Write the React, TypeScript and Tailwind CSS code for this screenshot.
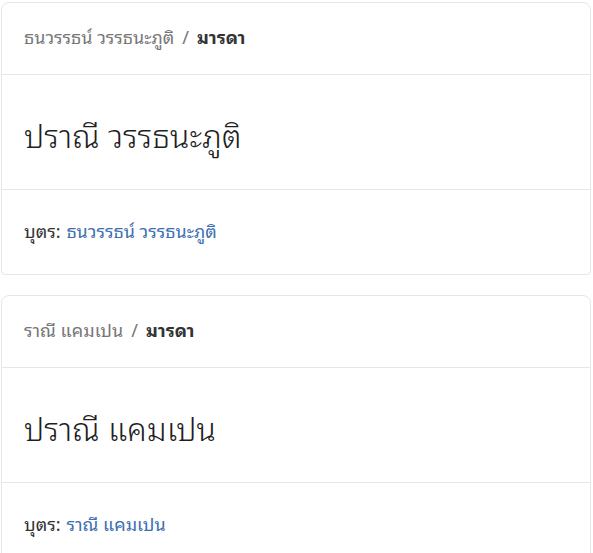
const cards = [
  { child: 'ธนวรรธน์ วรรธนะภูติ', relation: 'มารดา', name: 'ปราณี วรรธนะภูติ' },
  { child: 'ราณี แคมเปน', relation: 'มารดา', name: 'ปราณี แคมเปน' },
];

export default function App() {
  return (
    <div
      className="min-h-screen bg-white pt-[2px] pl-[1px] pr-[2px] flex flex-col gap-5 overflow-hidden"
      style={{ fontFamily: '"Noto Sans Thai Looped", Loma, Waree, Garuda, Tahoma, "Noto Sans", sans-serif' }}
    >
      {cards.map((c) => (
        <div key={c.name} className="bg-white border border-[#e6e6e6] rounded-t-lg rounded-b-sm">
          <div className="h-[72px] flex items-center px-[22px] pb-1 border-b border-[#e6e6e6] text-[18px]">
            <span className="text-[#777777]">{c.child}</span>
            <span className="text-[#777777] mx-2">/</span>
            <span className="text-[#333333] font-bold">{c.relation}</span>
          </div>
          <div className="h-[115px] flex items-center px-[22px] pt-1 border-b border-[#e6e6e6]">
            <h2 className="text-[32px] text-[#1f1f1f] font-light">{c.name}</h2>
          </div>
          <div className="h-[84px] flex items-center px-[22px] pb-1 text-[18px]">
            <span className="text-[#333333] mr-1.5">บุตร:</span>
            <a className="text-[#3d6fb0]">{c.child}</a>
          </div>
        </div>
      ))}
    </div>
  );
}
